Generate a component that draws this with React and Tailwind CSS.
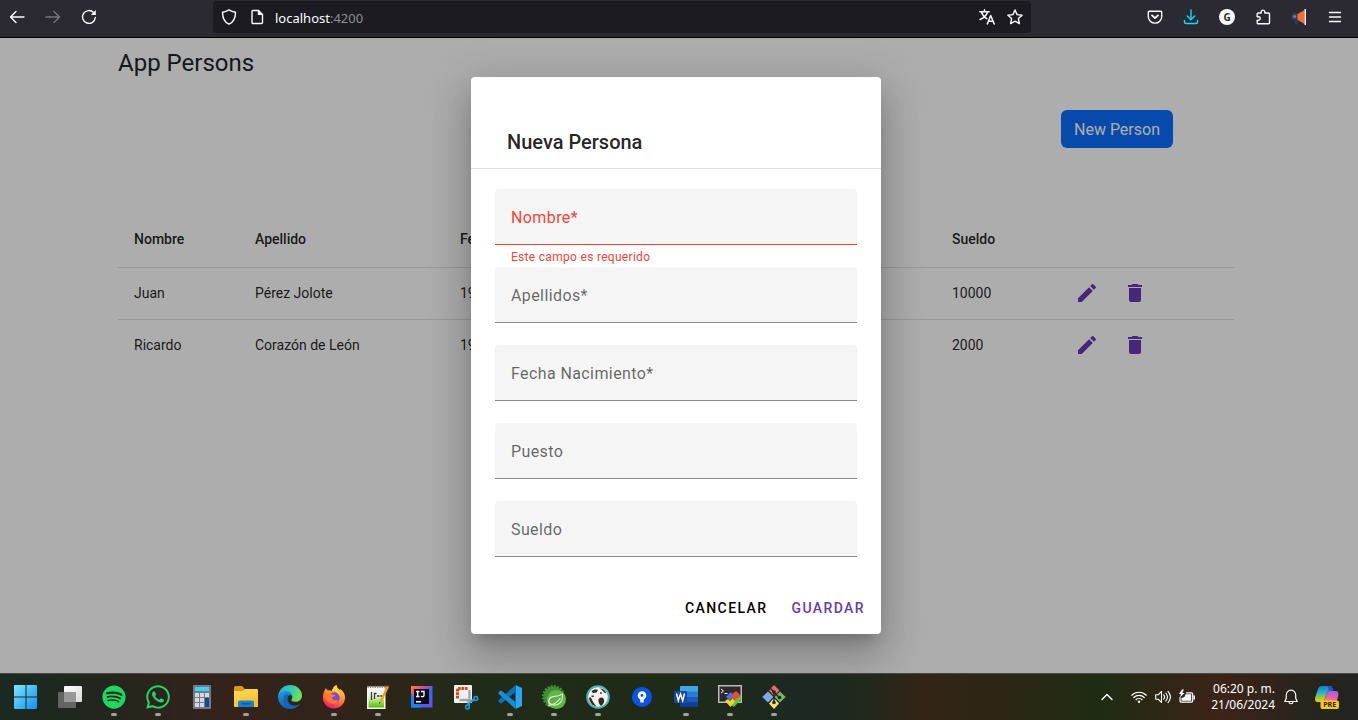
import React from 'react';
import { MdEdit, MdDelete } from 'react-icons/md';
import { FaSpotify, FaWhatsapp } from 'react-icons/fa';

const stroke = { fill: 'none', stroke: 'currentColor', strokeWidth: 1.4, strokeLinecap: 'round', strokeLinejoin: 'round' };

function Icon({ children, size = 16, box = 16, ...rest }) {
  return (
    <svg width={size} height={size} viewBox={`0 0 ${box} ${box}`} className="shrink-0" aria-hidden="true" {...rest}>
      {children}
    </svg>
  );
}

function BrowserBar() {
  return (
    <header className="flex h-[38px] shrink-0 items-start border-b border-black bg-[#2b2a33] pt-px font-['Noto_Sans',sans-serif] text-[#fbfbfe]">
      <div className="flex h-8 w-[213px] shrink-0 items-center gap-5 pl-[9px]">
        <button aria-label="Atrás">
          <Icon {...stroke}><path d="M15 8H1.5M7 2.5 1.5 8 7 13.5" /></Icon>
        </button>
        <button aria-label="Adelante" className="text-[#76757d]">
          <Icon {...stroke}><path d="M1 8h13.5M9 2.5 14.5 8 9 13.5" /></Icon>
        </button>
        <button aria-label="Recargar">
          <Icon {...stroke}>
            <path d="M14.3 8.5A6.4 6.4 0 1 1 12.6 3.6" />
            <path d="M14.8 1v5h-5z" fill="currentColor" stroke="none" />
          </Icon>
        </button>
      </div>
      <div className="flex h-8 min-w-0 flex-1 items-center rounded bg-[#1c1b22] px-2">
        <Icon {...stroke}><path d="M8 .9c2 1.300 4 2 6.500 2.300 0 5.500-1.500 9.800-6.500 12C3 13 1.500 8.700 1.500 3.200 4 2.900 6 2.200 8 .9z" /></Icon>
        <span className="w-3" />
        <Icon {...stroke}>
          <path d="M4 1.500h5.500L13.500 5.500v8a1 1 0 0 1-1 1h-8.500a1 1 0 0 1-1-1v-11a1 1 0 0 1 1-1z" />
          <path d="M8.800 1v5h5z" fill="currentColor" stroke="none" />
        </Icon>
        <div className="flex flex-1 items-center pt-px pl-[10px] text-[13px] leading-5">
          <span>localhost</span><span className="text-[#8f8f95]">:4200</span>
        </div>
        <div className="flex items-center gap-3">
          <button aria-label="Traducir">
            <Icon {...stroke} strokeWidth={1.5}>
              <path d="M.8 2.800h9.400M5.500.8v2M2.500 3c.8 3 2.800 5.200 5.200 6.600M8.500 3C7.600 6.200 4.500 9 1 10.500M8.300 15l3.400-8.500L15.200 15M9.500 12.300h4.500" />
            </Icon>
          </button>
          <button aria-label="Marcador">
            <Icon {...stroke}><path d="m8 1 2.100 4.600 5 .6-3.700 3.400 1 5L8 12.100l-4.400 2.500 1-5L.9 6.200l5-.6z" /></Icon>
          </button>
        </div>
      </div>
      <div className="flex h-8 w-[327px] shrink-0 items-center justify-end gap-5 pr-[15px]">
        <button aria-label="Pocket">
          <Icon {...stroke}>
            <path d="M2.500 2.200h11a1.200 1.200 0 0 1 1.200 1.200v4a6.700 6.700 0 0 1-13.400 0v-4a1.200 1.200 0 0 1 1.200-1.200z" />
            <path d="M5 6.300 8 9.200l3-2.900" strokeWidth="1.700" />
          </Icon>
        </button>
        <button aria-label="Descargas" className="text-[#00ddff]">
          <Icon {...stroke}><path d="M8 1v9.500M4.200 7 8 10.700 11.800 7M1.500 11.500V13a1.500 1.500 0 0 0 1.500 1.500h10a1.500 1.500 0 0 0 1.500-1.500v-1.500" /></Icon>
        </button>
        <button aria-label="Cuenta" className="flex size-4 items-center justify-center rounded-full bg-[#fbfbfe] text-[10px] leading-4 font-bold text-[#2b2a33]">G</button>
        <button aria-label="Extensiones">
          <Icon {...stroke}>
            <path d="M6.200 4V2.900a1.800 1.800 0 0 1 3.600 0V4h3.700a1 1 0 0 1 1 1v8.700a1 1 0 0 1-1 1H3.200a1 1 0 0 1-1-1V11.200h1.300a1.700 1.700 0 0 0 0-3.400H2.200V5a1 1 0 0 1 1-1z" />
          </Icon>
        </button>
        <button aria-label="Anuncios">
          <Icon>
            <circle cx="4" cy="7.500" r="3.500" fill="#2b4663" />
            <path d="M3 9h3l1 6.500H4.500z" fill="#24405c" />
            <circle cx="3.700" cy="7.500" r="1.500" fill="#6f8598" />
            <path d="M6.500 5 13.700 1v14l-7.200-4z" fill="#ff6a35" />
            <path d="M13.500 0h1.500v16h-1.500z" fill="#e9edf2" />
          </Icon>
        </button>
        <button aria-label="Menú">
          <Icon {...stroke}><path d="M2.500 3.500h11M2.500 8h11M2.500 12.500h11" /></Icon>
        </button>
      </div>
    </header>
  );
}

const persons = [
  { nombre: 'Juan', apellido: 'Pérez Jolote', fecha: '1990', puesto: '', sueldo: '10000' },
  { nombre: 'Ricardo', apellido: 'Corazón de León', fecha: '1985', puesto: '', sueldo: '2000' },
];

function PersonsPage() {
  return (
    <main className="mx-auto w-full max-w-[1116px] text-[#212529]">
      <h1 className="pt-2 text-2xl leading-[34px]">App Persons</h1>
      <div className="mt-[30px] mr-[61px] flex justify-end">
        <button className="h-[38px] rounded-md bg-[#0d6efd] px-[13px] pt-px text-base leading-6 text-white">New Person</button>
      </div>
      <table className="mt-[63px] w-full table-fixed border-collapse text-left text-sm leading-5 text-black/87">
        <colgroup>
          <col className="w-[121px]" />
          <col className="w-[205px]" />
          <col className="w-[280px]" />
          <col />
          <col className="w-[111px]" />
          <col className="w-[187px]" />
        </colgroup>
        <thead>
          <tr className="h-14 border-b border-black/12 [&>th]:px-4 [&>th]:font-medium">
            <th>Nombre</th>
            <th>Apellido</th>
            <th>Fecha</th>
            <th>Puesto</th>
            <th>Sueldo</th>
            <th aria-label="Acciones" />
          </tr>
        </thead>
        <tbody>
          {persons.map((p) => (
            <tr key={p.nombre} className="h-[52px] border-b border-black/12 last:border-b-0 [&>td]:px-4">
              <td>{p.nombre}</td>
              <td>{p.apellido}</td>
              <td>{p.fecha}</td>
              <td>{p.puesto}</td>
              <td>{p.sueldo}</td>
              <td>
                <div className="flex text-[#673ab7]">
                  <button aria-label="Editar" className="flex size-12 items-center justify-center"><MdEdit size={24} /></button>
                  <button aria-label="Eliminar" className="flex size-12 items-center justify-center"><MdDelete size={24} /></button>
                </div>
              </td>
            </tr>
          ))}
        </tbody>
      </table>
    </main>
  );
}

function Field({ label, name, error }) {
  return (
    <div>
      <label
        className={
          error
            ? 'flex h-14 items-center rounded-t border-b border-[#f44336] bg-[#f5f5f5] px-4 pt-0.5 text-[#f44336]'
            : 'flex h-14 items-center rounded-t border-b border-[#8c8c8c] bg-[#f5f5f5] px-4 pt-0.5 text-black/60'
        }
      >
        <span className="text-base leading-6 tracking-wide">{label}</span>
        <input name={name} type="text" className="min-w-0 flex-1 bg-transparent outline-none" />
      </label>
      <p className="h-[22px] px-4 text-xs leading-6 tracking-wide text-[#f44336]">{error}</p>
    </div>
  );
}

function PersonDialog() {
  return (
    <form
      role="dialog"
      aria-label="Nueva Persona"
      className="flex w-[410px] flex-col rounded bg-white shadow-[0_11px_15px_-7px_rgba(0,0,0,0.2),0_24px_38px_3px_rgba(0,0,0,0.14),0_9px_46px_8px_rgba(0,0,0,0.12)]"
    >
      <h2 className="border-b border-black/12 px-9 pt-[49px] pb-[10px] text-xl leading-8 font-medium text-black/87">Nueva Persona</h2>
      <div className="px-6 pt-5">
        <Field label="Nombre*" name="nombre" error="Este campo es requerido" />
        <Field label="Apellidos*" name="apellidos" />
        <Field label="Fecha Nacimiento*" name="fecha" />
        <Field label="Puesto" name="puesto" />
        <Field label="Sueldo" name="sueldo" />
      </div>
      <div className="flex justify-end gap-2 px-2 pt-[11px] pb-2 text-sm leading-9 font-medium tracking-widest">
        <button type="button" className="px-2 text-black">CANCELAR</button>
        <button type="button" className="px-2 text-[#673ab7]">GUARDAR</button>
      </div>
    </form>
  );
}

const apps = [
  ['Inicio', false, (
    <>
      <linearGradient id="win" x1="0" y1="0" x2="1" y2="1"><stop stopColor="#7fe6ff" /><stop offset="1" stopColor="#1090f0" /></linearGradient>
      <path d="M1 0h10.500v11.500H0V1a1 1 0 0 1 1-1zM12.500 0H22a1 1 0 0 1 1 1v10.500H12.500zM0 12.500h11.500V24H1a1 1 0 0 1-1-1zM12.500 12.500H23V23a1 1 0 0 1-1 1h-9.500z" fill="url(#win)" />
    </>
  )],
  ['Vista de tareas', false, (
    <>
      <linearGradient id="tv" x1="0" y1="0" x2="1" y2="1"><stop stopColor="#fff" /><stop offset="1" stopColor="#d9d9d9" /></linearGradient>
      <rect x="6" y="1" width="18" height="16" rx="1" fill="url(#tv)" />
      <rect x="0" y="7" width="18" height="16" rx="1" fill="#646464" />
      <path d="M6 7h12v10H6z" fill="#989898" />
    </>
  )],
  ['Spotify', true, <FaSpotify size={24} color="#1ed760" />],
  ['WhatsApp', true, <FaWhatsapp size={27} x="-1.500" y="-1.500" color="#25d366" />],
  ['Calculadora', false, (
    <>
      <rect x="3" y="0" width="18" height="24" rx="1" fill="#737b87" />
      <rect x="5" y="2" width="14" height="4" fill="#3fd0f5" />
      <path d="M5 8h4v4H5zM10 8h4v4h-4zM15 8h4v4h-4zM5 13h4v4H5zM10 13h4v4h-4zM5 18h4v4H5zM10 18h4v4h-4z" fill="#d6dae0" />
      <path d="M15 13h4v9h-4z" fill="#124a91" />
    </>
  )],
  ['Explorador', true, (
    <>
      <linearGradient id="fold" x1="0" y1="0" x2="0.500" y2="1"><stop stopColor="#ffdc62" /><stop offset="1" stopColor="#f8bd29" /></linearGradient>
      <path d="M0 2.500A1.500 1.500 0 0 1 1.500 1H8l2.500 2.500V8H0z" fill="#dc9b10" />
      <path d="M0 6h8.500l2.500-2h12a1 1 0 0 1 1 1v17H1a1 1 0 0 1-1-1z" fill="url(#fold)" />
      <path d="M4 22v-4.500A2 2 0 0 1 6 15.500h12a2 2 0 0 1 2 2V22z" fill="#1682cf" />
      <path d="M7.500 18h9v1.500h-9z" fill="#0d5c9d" />
    </>
  )],
  ['Edge', false, (
    <>
      <linearGradient id="ed1" x1="0" y1="0" x2="1" y2="0.300"><stop stopColor="#25a6df" /><stop offset="0.600" stopColor="#36cbb4" /><stop offset="1" stopColor="#6ee052" /></linearGradient>
      <linearGradient id="ed2" x1="0" y1="0" x2="0.500" y2="1"><stop stopColor="#1f9fe5" /><stop offset="1" stopColor="#0b58ad" /></linearGradient>
      <path d="M.3 10C1.500 4 6 0 12 0c7 0 12 5 12 10.500 0 4-3 6.300-6.500 6.300-3 0-4.500-1-4-2.300 1.800-2.200.8-6-3.500-6.500-4-.4-7.500 1-9.700 4z" fill="url(#ed1)" />
      <path d="M.2 11C1.500 7.500 5 5.800 8.500 6c4 .2 6.200 3 5.700 6-.2-2-2-2.600-3.500-1.500-3 2.300-1.200 9.500 4.800 10.300 2.500.3 4.600-.5 6.500-2C19.500 22.300 16 24 12 24 4.500 24-.5 17.500.2 11z" fill="url(#ed2)" />
      <path d="M7 9.500C4 13 5 20.500 12 24c4 0 7.500-1.800 10-5.200-2 1.500-4 2.300-6.500 2C9.500 20 7.700 13 10.700 10.500 9.500 9 8 9 7 9.500z" fill="#1566b4" />
    </>
  )],
  ['Firefox', true, (
    <>
      <linearGradient id="fx" x1="0.800" y1="0" x2="0.300" y2="1"><stop stopColor="#ffe442" /><stop offset="0.450" stopColor="#ff9325" /><stop offset="0.800" stopColor="#ff3c50" /><stop offset="1" stopColor="#e8187d" /></linearGradient>
      <path d="M4 3c.2 1 .8 1.800 1.500 2.300C7 5 8.500 5 10 6c.5-2.500 2-4.800 4.500-6 .3 2.500 2 3.500 3.500 5.300l.5-1.300c3 2.500 4.500 5 4.500 8.500C23 19 18 23.500 12 23.500S.8 19 .8 12.800C.8 9.500 2 6 4 3z" fill="url(#fx)" />
      <circle cx="12.300" cy="12.500" r="5.300" fill="#7448e8" />
      <path d="M2.500 9.500C5 7.500 8 7.800 10.500 9.500l3 .5c-.3 1.500-2.500 1.500-3.500 3 .5 2.500 4 3 6 1.200-.5 3.500-4 5-7.500 4C4.500 17 2 13 2.500 9.500z" fill="#ff7c2c" />
      <path d="M14.500 0c-3 1.500-4.500 4.500-4.500 6 3.500-.3 6.500 1.500 7.500 5 .5-2.500 0-4-1-5.700C15 3.500 14.500 2 14.500 0z" fill="#ffd73a" />
    </>
  )],
  ['Notepad++', true, (
    <>
      <linearGradient id="npp" x1="0" y1="0" x2="0" y2="1"><stop offset="0.300" stopColor="#eef3e6" /><stop offset="0.550" stopColor="#b8e58a" /><stop offset="1" stopColor="#4fbf08" /></linearGradient>
      <path d="M1 1.500h18.500V24H1z" fill="#f5f5f5" />
      <path d="M2.500 5h15.500v17.500H2.500z" fill="url(#npp)" />
      <path d="M1.500 1.800h18" stroke="#8b8b8b" strokeWidth="2.200" strokeDasharray="1.200 1.200" />
      <path d="M5.500 7v8M8.500 8v6M8 8.500h2.500M11 11h2.500M14.300 11h2" fill="none" stroke="#3a3a3a" strokeWidth="1.300" />
      <path d="m13 19 1-3.500L20.500 1l2.500 1-7 14.500z" fill="#e8a122" />
      <path d="M20.500 1 21 0l2.500 1-.5 1z" fill="#b53a31" />
      <path d="m13 19 .6-2 1 .8z" fill="#222" />
    </>
  )],
  ['IntelliJ IDEA', false, (
    <>
      <linearGradient id="ij" x1="0" y1="0" x2="1" y2="1"><stop stopColor="#ff8b22" /><stop offset="0.300" stopColor="#e941a2" /><stop offset="0.550" stopColor="#2d6cf4" /><stop offset="1" stopColor="#6b4df0" /></linearGradient>
      <path d="M1 1h21.500v21.500H1z" fill="url(#ij)" />
      <path d="M1 8v14.500h10z" fill="#1787ef" />
      <path d="M4 4h15v15H4z" fill="#110817" />
      <path d="M6 6.500h3.500M7.700 6.500v5M6 11.500h3.500M11 6.500h3v4c0 1-1.500 1.500-3 .8" fill="none" stroke="#fff" strokeWidth="1.300" />
      <path d="M6 16h5v1.500H6z" fill="#fff" />
    </>
  )],
  ['Recortes', false, (
    <>
      <path d="M1 0h16a1 1 0 0 1 1 1v16a1 1 0 0 1-1 1H1a1 1 0 0 1-1-1V1a1 1 0 0 1 1-1z" fill="#f0f0f0" />
      <path d="M3.500 13.500v-10h10" fill="none" stroke="#d4471c" strokeWidth="3" strokeDasharray="2.700 .8" />
      <path d="M15.500 5v11L20 15M5.500 15H14l1 5" fill="none" stroke="#9ba5ad" strokeWidth="2.300" />
      <circle cx="21.800" cy="13.500" r="1.900" fill="none" stroke="#199de5" strokeWidth="1.500" />
      <circle cx="13.500" cy="22" r="1.900" fill="none" stroke="#199de5" strokeWidth="1.500" />
      <path d="m16 17 4-2.500M14.500 20l1.500-3" stroke="#199de5" strokeWidth="1.500" />
    </>
  )],
  ['Visual Studio Code', true, (
    <>
      <path d="m17.500 0 6.500 3v18l-6.500 3z" fill="#29a5f3" />
      <path d="M17.500 0v7L3.500 18.200a1 1 0 0 1-1.300 0L.6 16.700a1 1 0 0 1 0-1.400z" fill="#0b70b8" />
      <path d="M17.500 24v-7L3.500 5.800a1 1 0 0 0-1.300 0L.6 7.300a1 1 0 0 0 0 1.400z" fill="#188ed8" />
    </>
  )],
  ['Spring Tools', true, (
    <>
      <circle cx="11.500" cy="11.500" r="10" fill="none" stroke="#3d8e35" strokeWidth="3" strokeDasharray="2 1.140" />
      <circle cx="11.500" cy="11.500" r="10" fill="#3d8e35" />
      <circle cx="14.500" cy="14.500" r="9.500" fill="#61b746" />
      <path d="M6.500 18.500C5 13 9 11 13 10.800c3.500-.2 6-1 7.500-3 1.500 6.500-1 12-6.500 12.700-2.500.3-5-.3-7.500-2z" fill="#e4f3dc" />
      <path d="M7.500 17.500C7 13.500 10 12 13.500 11.800c3-.2 5-.8 6.300-2.200.7 5.200-1.300 9-5.800 9.800-2.500.3-4.500-.4-6.500-1.900z" fill="#5fb145" />
      <path d="M5.500 20.500c6-.5 10-3 13-7.500" fill="none" stroke="#e4f3dc" strokeWidth="1.100" />
    </>
  )],
  ['DBeaver', true, (
    <>
      <circle cx="12" cy="12" r="11.800" fill="#4ab5bd" />
      <circle cx="12" cy="12" r="9.800" fill="#f7f3f0" />
      <path d="M5.500 6.500C7.500 4.300 10 4.300 12 5L10.500 7.500 7 8z" fill="#39291f" />
      <path d="M13.500 3.500c3.500-.3 6 2 6.800 5l-2-.7C17.500 6.300 16 5 13.500 3.500z" fill="#39291f" />
      <path d="M14 7.200h1.800v1.500H14zM5.500 10.500h2.300V12H5.500z" fill="#39291f" />
      <path d="M12.500 14.500c1-2.500 4.500-3 5.500 0 .7 2.500-.5 4.800-3 6.500-1.500-1.500-3-3.500-2.500-6.500z" fill="#39291f" />
      <path d="M3 12.500c.3 4.500 3 8 7.500 9C8 18.500 6 15.500 5 12.500z" fill="#39291f" />
    </>
  )],
  ['Sourcetree', false, (
    <>
      <circle cx="12" cy="12" r="10" fill="#0754e7" />
      <circle cx="12" cy="10.500" r="4.300" fill="#fff" />
      <circle cx="12" cy="10.500" r="1.400" fill="#0754e7" />
      <path d="M10.300 13.500h3.400v4h-3.400z" fill="#fff" />
    </>
  )],
  ['Word', true, (
    <>
      <path d="M7 1h16a1 1 0 0 1 1 1v5H6V2a1 1 0 0 1 1-1z" fill="#41a5ee" />
      <path d="M6 6.500h18V12H6z" fill="#2b7cd3" />
      <path d="M6 12h18v5H6z" fill="#185abd" />
      <path d="M6 17h18v4a1 1 0 0 1-1 1H7a1 1 0 0 1-1-1z" fill="#103f91" />
      <rect x="0" y="6" width="13" height="12" rx="1" fill="#164ba0" />
      <path d="m2.500 8.500 1.800 7L6.500 9l2.200 6.500 1.800-7" fill="none" stroke="#fff" strokeWidth="1.500" />
    </>
  )],
  ['MobaXterm', true, (
    <>
      <path d="M0 0h24v18H0z" fill="#bdbdbd" />
      <path d="M1.500 1.500h21v15h-21z" fill="#2a292b" />
      <path d="m3 4 2.500 2L3 8M6.500 8.500h3" fill="none" stroke="#fff" />
      <path d="m8 12 4.500-5L16 11l-4 4.500z" fill="#3c78ec" />
      <path d="m14 9 4-3 5 4.500-3.500 3.500-2 3-3.500-3z" fill="#ee4a32" />
      <path d="m14 17 4-3 5-3.500v4l-7 7.500-3-2z" fill="#59c534" />
      <path d="m7 16 3-2 2 2 2.500-2.500 2.500 3-4.500 5.500z" fill="#f3d62d" />
    </>
  )],
  ['Git', true, (
    <>
      <path d="m12 0 5.500 5.500-5.500 5.500-5-5.500z" fill="#f0686d" />
      <path d="m6 6.500 5.500 5.500L6 17.500.3 12z" fill="#78aaf5" />
      <path d="m18 6.500 5.700 5.500-5.700 5.500-5.500-5.500z" fill="#74b764" />
      <path d="m12 13 5 5.500-5 5.500-5-5.500z" fill="#ffe06d" />
      <path d="M8.500 3.500 12 7v11M12.500 8l5 4.500" fill="none" stroke="#252820" strokeWidth="1.500" />
      <circle cx="12" cy="7" r="1.800" fill="#252820" /><circle cx="12" cy="17.500" r="1.800" fill="#252820" /><circle cx="17.500" cy="12.500" r="1.800" fill="#252820" />
    </>
  )],
];

function Taskbar() {
  return (
    <footer className="flex h-[47px] shrink-0 items-center border-t border-[#474844] bg-linear-[90deg,#1b2a20_0%,#22261e_7%,#35231b_17%,#2f2418_27%,#202c17_35%,#1f2b19_50%,#1c2822_59%,#22281c_64%,#332417_68%,#2c2616_74%,#1f2c14_81%,#3d2318_90%,#28241e_96%,#22241f_100%] pl-1 font-['Noto_Sans',sans-serif] text-white">
      <nav className="flex flex-1">
        {apps.map(([name, open, art]) => (
          <button key={name} aria-label={name} className="flex h-[46px] w-11 flex-col items-center pt-[11px]">
            <Icon size={24} box={24} overflow="visible">{art}</Icon>
            {open && <span className="mt-1 h-[3px] w-1.5 rounded-full bg-[#a3a29e]" />}
          </button>
        ))}
      </nav>
      <div className="flex items-center pr-[19px]">
        <button aria-label="Iconos ocultos" className="mr-[18px]">
          <Icon size={12} box={12} {...stroke}><path d="m1 8.500 5-5 5 5" /></Icon>
        </button>
        <button aria-label="Red y sonido" className="mr-4 flex items-center gap-2">
          <Icon {...stroke} strokeWidth={1.200}>
            <path d="M.7 6.200a10.500 10.500 0 0 1 14.600 0M2.800 8.500a7.500 7.500 0 0 1 10.400 0M5 10.700a4.300 4.300 0 0 1 6 0" />
            <circle cx="8" cy="12.700" r="1.200" fill="currentColor" stroke="none" />
          </Icon>
          <Icon {...stroke} strokeWidth={1.100}>
            <path d="M.7 5.800h2.500L6.500 2.500v11L3.200 10.200H.7zM8.700 5.800c1 1.300 1 3.100 0 4.400M10.800 4c2 2.400 2 5.600 0 8M13 2.300c3 3.500 3 7.900 0 11.400" />
          </Icon>
          <Icon>
            <path d="M1 8.500v3.200a1.500 1.500 0 0 0 1.500 1.500h9.700a1.500 1.500 0 0 0 1.500-1.500V5.300a1.500 1.500 0 0 0-1.500-1.500H7.500" {...stroke} strokeWidth="1.200" />
            <path d="M6.500 5.300h5.700v6.400H2.500V9l3-1z" fill="currentColor" />
            <path d="M14.500 6.500H16v4h-1.500zM3 .5 0 5h2L.8 8.500 5.500 4H3.300L5 .5z" fill="currentColor" />
          </Icon>
        </button>
        <div className="mr-2 text-right text-xs leading-4">
          <div>06:20 p. m.</div>
          <div>21/06/2024</div>
        </div>
        <button aria-label="Notificaciones" className="mr-4">
          <Icon {...stroke} strokeWidth={1.200}><path d="M8 1.200a4.700 4.700 0 0 0-4.700 4.700v3.300L1.800 12.500h12.400l-1.500-3.300V5.900A4.700 4.700 0 0 0 8 1.200zM6 13c.3 2.300 3.700 2.300 4 0" /></Icon>
        </button>
        <button aria-label="Copilot">
          <Icon size={24} box={24}>
            <linearGradient id="cp1" x1="0" y1="0" x2="0" y2="1"><stop stopColor="#1479d8" /><stop offset="0.400" stopColor="#22b7c9" /><stop offset="0.700" stopColor="#8dcc45" /><stop offset="1" stopColor="#f5c914" /></linearGradient>
            <linearGradient id="cp2" x1="0.500" y1="0" x2="0.300" y2="1"><stop stopColor="#a65af0" /><stop offset="0.600" stopColor="#ef609f" /><stop offset="1" stopColor="#ff9063" /></linearGradient>
            <path d="M7 1h8c1.500 0 2 .8 2.500 2.500l.7 2.500H14c-1.500 0-2 1-2.500 2.500L8.800 17H3c-2.500 0-3.500-2-2.800-4.500L3 4c.7-2 2-3 4-3z" fill="url(#cp1)" />
            <path d="M15 6h5.500C23 6 24 8 23.300 10.500L21.500 17H9l2.500-8.500C12.200 6.800 13 6 15 6z" fill="url(#cp2)" />
            <path d="M13 1h2c1.500 0 2 .8 2.500 2.500l.7 2.500H14z" fill="#1d55c8" />
            <rect x="5.500" y="15.500" width="18.500" height="8.500" rx="2" fill="#ffc80a" />
            <text x="14.700" y="22.300" textAnchor="middle" fontSize="7" fontWeight="700" fontFamily="Noto Sans, sans-serif" fill="#222">PRE</text>
          </Icon>
        </button>
      </div>
    </footer>
  );
}

export default function App() {
  return (
    <div className="flex min-h-screen flex-col font-[Roboto,sans-serif]">
      <BrowserBar />
      <div className="relative flex-1 bg-white pr-1.5">
        <PersonsPage />
        <div className="absolute inset-0 flex items-center justify-center overflow-hidden bg-black/32 pr-1.5">
          <PersonDialog />
        </div>
      </div>
      <Taskbar />
    </div>
  );
}
